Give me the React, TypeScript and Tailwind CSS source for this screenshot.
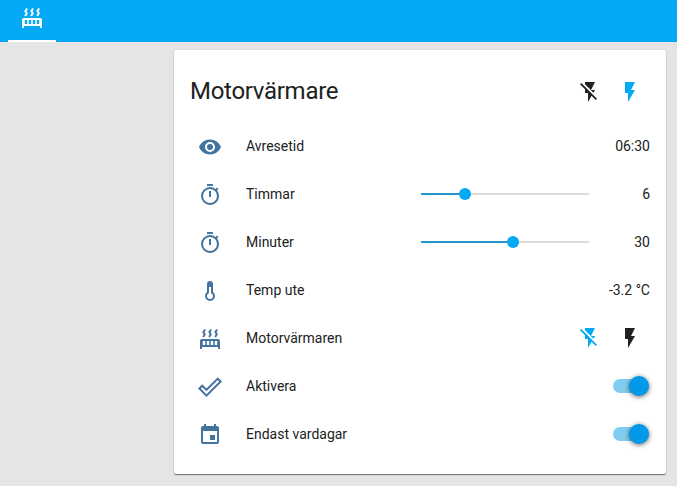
import type { ReactNode } from 'react';

const icons = {
  eye: 'M12,9A3,3 0 0,0 9,12A3,3 0 0,0 12,15A3,3 0 0,0 15,12A3,3 0 0,0 12,9M12,17A5,5 0 0,1 7,12A5,5 0 0,1 12,7A5,5 0 0,1 17,12A5,5 0 0,1 12,17M12,4.5C7,4.5 2.73,7.61 1,12C2.73,16.39 7,19.5 12,19.5C17,19.5 21.27,16.39 23,12C21.27,7.61 17,4.5 12,4.5Z',
  timer: 'M12,20A7,7 0 0,1 5,13A7,7 0 0,1 12,6A7,7 0 0,1 19,13A7,7 0 0,1 12,20M19.03,7.39L20.45,5.97C20,5.46 19.55,5 19.04,4.56L17.62,6C16.07,4.74 14.12,4 12,4A9,9 0 0,0 3,13A9,9 0 0,0 12,22C17,22 21,17.97 21,13C21,10.88 20.26,8.93 19.03,7.39M11,14H13V8H11M15,1H9V3H15V1Z',
  flash: 'M7,2V13H10V22L17,10H13L17,2H7Z',
  flashOff: 'M17,10H13L17,2H7V4.18L15.46,12.64M3.27,3L2,4.27L7,9.27V13H10V22L13.58,15.86L17.73,20L19,18.73L3.27,3Z',
  thermometer: 'M17,17A5,5 0 0,1 12,22A5,5 0 0,1 7,17C7,15.36 7.79,13.91 9,13V5A3,3 0 0,1 12,2A3,3 0 0,1 15,5V13C16.21,13.91 17,15.36 17,17M11,8V14.17C9.83,14.58 9,15.69 9,17A3,3 0 0,0 12,20A3,3 0 0,0 15,17C15,15.69 14.17,14.58 13,14.17V8H11Z',
  check: 'M19.78,2.2L24,6.42L8.44,22L0,13.55L4.22,9.33L8.44,13.55L19.78,2.2M19.78,5L8.44,16.36L4.22,12.19L2.81,13.55L8.44,19.17L21.19,6.42L19.78,5Z',
  calendar: 'M19,19H5V8H19M16,1V3H8V1H6V3H5C3.89,3 3,3.89 3,5V19A2,2 0 0,0 5,21H19A2,2 0 0,0 21,19V5C21,3.89 20.1,3 19,3H18V1M17,12H12V17H17V12Z',
  radiator: 'M7.95,3L6.53,5.19L7.95,7.4H7.94L5.95,10.5L4.22,9.6L5.64,7.39L4.22,5.19L6.22,2.09L7.95,3M13.95,2.89L12.53,5.1L13.95,7.3L13.94,7.31L11.95,10.4L10.22,9.5L11.64,7.3L10.22,5.1L12.22,2L13.95,2.89M20,2.89L18.56,5.1L20,7.3V7.31L18,10.4L16.25,9.5L17.67,7.3L16.25,5.1L18.25,2L20,2.89M2,22V14A2,2 0 0,1 4,12H20A2,2 0 0,1 22,14V22H20V20H4V22H2M4.8,14V18H7.2V14H4.8M8.8,14V18H11.2V14H8.8M12.8,14V18H15.2V14H12.8M16.8,14V18H19.2V14H16.8Z',
};

type IconName = keyof typeof icons;

function Icon({ name, className }: { name: IconName; className?: string }) {
  return (
    <svg viewBox="0 0 24 24" fillRule="evenodd" className={`size-6 shrink-0 fill-current ${className ?? ''}`}>
      <path d={icons[name]} />
    </svg>
  );
}

function FlashButtons({ on }: { on: boolean }) {
  return (
    <div className="mr-2 flex gap-4">
      <Icon name="flashOff" className={on ? 'text-[#212121]' : 'text-[#03a9f4]'} />
      <Icon name="flash" className={on ? 'text-[#03a9f4]' : 'text-[#212121]'} />
    </div>
  );
}

function Row({ icon, label, children }: { icon: IconName; label: string; children: ReactNode }) {
  return (
    <div className="flex h-12 items-center">
      <div className="flex w-10 justify-center pt-0.5 text-[#44739e]">
        <Icon name={icon} />
      </div>
      <span className="ml-4 flex-1">{label}</span>
      {children}
    </div>
  );
}

function Slider({ percent, value }: { percent: number; value: string }) {
  return (
    <>
      <div className="relative h-0.5 w-[168px] bg-[#dcdcdc]">
        <div className="h-full bg-[#2196c9]" style={{ width: `${percent}%` }} />
        <div
          className="absolute -top-[5px] -ml-1.5 size-3 rounded-full bg-[#03a9f4]"
          style={{ left: `${percent}%` }}
        />
      </div>
      <span className="w-[61px] text-right">{value}</span>
    </>
  );
}

function Toggle() {
  return (
    <div className="relative mr-px h-3.5 w-9 rounded-full bg-[#81cdf0]">
      <div className="absolute -top-[3px] right-0 size-5 rounded-full bg-[#0399e9] shadow-[0_1px_5px_rgba(0,0,0,0.6)]" />
    </div>
  );
}

export default function App() {
  return (
    <div className="flex h-screen flex-col overflow-hidden bg-[#e5e5e5] font-[Roboto,sans-serif] text-sm text-[#212121]">
      <header className="flex h-[42px] shrink-0 bg-[#03a9f4] pl-2">
        <div className="flex w-12 justify-center border-b-2 border-white pt-1.5 text-white">
          <Icon name="radiator" />
        </div>
      </header>
      <main className="mt-2 mr-[11px] ml-[174px] h-[424px] rounded-[2px] bg-white px-4 shadow-[0_1px_1px_rgba(0,0,0,0.5),0_0_2px_rgba(0,0,0,0.12)]">
        <div className="flex h-[72px] items-center justify-between pt-3">
          <h1 className="pb-0.5 text-2xl tracking-[-0.012em]">Motorvärmare</h1>
          <FlashButtons on />
        </div>
        <Row icon="eye" label="Avresetid">06:30</Row>
        <Row icon="timer" label="Timmar"><Slider percent={26.2} value="6" /></Row>
        <Row icon="timer" label="Minuter"><Slider percent={54.8} value="30" /></Row>
        <Row icon="thermometer" label="Temp ute">-3.2 °C</Row>
        <Row icon="radiator" label="Motorvärmaren"><FlashButtons on={false} /></Row>
        <Row icon="check" label="Aktivera"><Toggle /></Row>
        <Row icon="calendar" label="Endast vardagar"><Toggle /></Row>
      </main>
    </div>
  );
}
